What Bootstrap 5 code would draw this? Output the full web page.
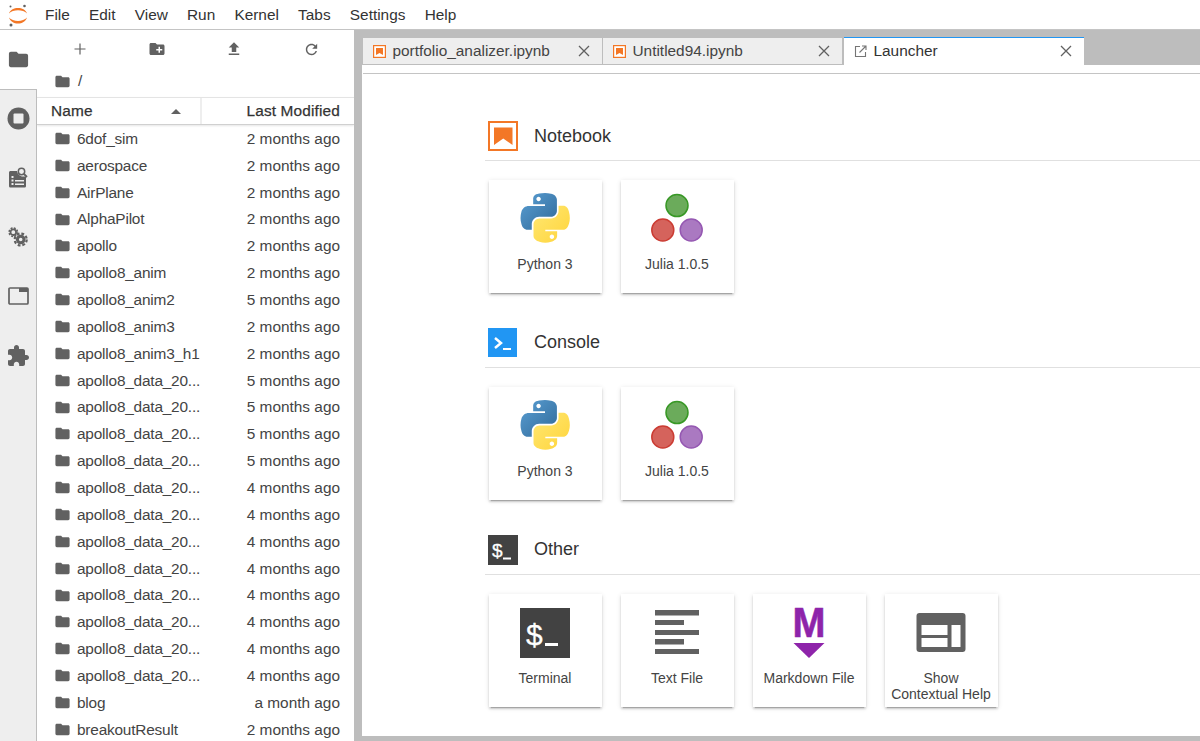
<!DOCTYPE html>
<html lang="en">
<head>
<meta charset="utf-8">
<title>JupyterLab</title>
<link href="https://cdn.jsdelivr.net/npm/bootstrap@5.3.0/dist/css/bootstrap.min.css" rel="stylesheet">
<style>
html,body{height:741px;overflow:hidden;}
body{font-family:"Liberation Sans",Arial,sans-serif;font-size:15.4px;color:#444;background:#fff;}
symbol{overflow:visible;}
.ic{fill:#616161;display:block;flex:none;}
.topmenu{height:30px;border-bottom:1px solid #c4c4c4;padding:0 0 0 8px;gap:19.2px;color:#333;}
.topmenu .brandlogo{margin-right:-2.200px;}
.workspace{height:711px;}
.siderail{width:37px;flex:none;}
.railbtn{height:59.4px;background:#eee;border-right:1px solid #bdbdbd;}
.railbtn.first{background:#fff;border-right:0;height:58.6px;}
.railbtn.second{border-top:1px solid #bdbdbd;}
.railfill{background:#eee;border-right:1px solid #bdbdbd;}
.browser{width:317px;flex:none;}
.fbtools{height:37px;padding:1px 4px 0;}
.fbtools>div{width:77.3px;}
.crumbs{height:30px;padding:0 0 2px 17px;gap:7px;color:#444;}
.fbhead{height:28px;border-top:1px solid #e4e4e4;border-bottom:1px solid #d0d0d0;box-shadow:0 1px 2px rgba(0,0,0,.1);color:#333;-webkit-text-stroke:.25px #333;letter-spacing:.15px;position:relative;}
.hname{width:165px;padding-left:14px;border-right:2px solid #eee;}
.hdate{padding-right:14px;}
.caretup{width:0;height:0;border:5px solid transparent;border-top:0;border-bottom:5px solid #616161;margin-right:19px;}
.fbrow{height:26.86px;padding:0 14px 0 17px;border:0;color:#444;background:transparent;}
.fbname{margin-left:6px;white-space:nowrap;letter-spacing:-.2px;}
.splitter{width:8px;flex:none;background:#bdbdbd;}
.mainarea{min-width:0;margin-left:1px;}
.tabstrip{height:35px;background:#bdbdbd;padding-top:8px;margin-left:-1px;padding-left:1px;flex:none;}
.doctab{width:240px;height:27px;background:#eee;border-right:1px solid #bdbdbd;border-bottom:1px solid #bdbdbd;padding:0 12px 0 10px;gap:6.5px;color:#444;}
.doctab.on{width:240px;margin-left:1px;height:28px;margin-top:-1px;background:#fff;color:#333;border-top:1px solid #2196f3;border-right:0;border-bottom:0;padding-bottom:1px;}
.tabtitle{white-space:nowrap;}
.tabspacer{height:9px;flex:none;border-bottom:1px solid #c4c4c4;}
.launcherbody{padding:47px 0 0 122px;overflow:hidden;min-height:0;}
.sechead{height:40px;border-bottom:1px solid #e0e0e0;padding:0 0 9px 3px;gap:16px;font-size:18px;color:#333;width:900px;}
.sechead.later{padding-bottom:10px;}
.secgrid{padding:19px 0 35px 3.5px;gap:19px;}
.tile{width:113px;height:113px;flex:none;border:0;border-radius:0;padding-top:13px;box-shadow:0 3px 1px -2px rgba(0,0,0,.2),0 2px 2px 0 rgba(0,0,0,.14),0 1px 5px 0 rgba(0,0,0,.12);font-size:14px;line-height:16px;color:#444;text-align:center;}
.tile svg{display:block;margin:0 auto;overflow:visible;}
.tilelabel{margin-top:13px;padding:0 4px;}
.bottomband{height:5px;background:#bdbdbd;flex:none;margin-left:-1px;}
</style>
</head>
<body>
<svg width="0" height="0" class="position-absolute">
<defs>
<symbol id="folder" viewBox="0 0 24 24"><path d="M10 4H4c-1.1 0-2 .9-2 2v12c0 1.1.9 2 2 2h16c1.1 0 2-.9 2-2V8c0-1.1-.9-2-2-2h-8l-2-2z"/></symbol>
<symbol id="closex" viewBox="0 0 12 12"><path d="M1 1l10 10M11 1L1 11" stroke="#616161" stroke-width="1.3" fill="none"/></symbol>
<symbol id="nbsmall" viewBox="0 0 13 13"><rect x=".6" y=".6" width="11.8" height="11.8" fill="#fff" stroke="#f37726" stroke-width="1.2"/><path d="M3 3h7v7L6.5 8 3 10z" fill="#f37726"/></symbol>
<linearGradient id="pyb" x1="0" y1="0" x2="1" y2="1"><stop offset="0" stop-color="#5a9fd4"/><stop offset="1" stop-color="#306998"/></linearGradient>
<linearGradient id="pyy" x1="0" y1="0" x2="1" y2="1"><stop offset="0" stop-color="#ffe873"/><stop offset="1" stop-color="#ffd43b"/></linearGradient>
<symbol id="python" viewBox="0 0 110 110">
<path fill="url(#pyb)" d="M54.9 0c-4.6 0-8.9.4-12.7 1.1C31 3.1 29 7.2 29 14.9V25h26v3.4H19.3c-7.6 0-14.2 4.6-16.3 13.2-2.4 9.9-2.5 16 0 26.3 1.8 7.7 6.3 13.2 13.9 13.2h9V68.2c0-8.6 7.4-16.1 16.3-16.1h26c7.2 0 13-6 13-13.2V14.9c0-7-5.9-12.3-13-13.5C63.7.4 59 0 54.9 0zM40.9 8c2.7 0 4.9 2.2 4.9 5 0 2.7-2.2 4.9-4.9 4.9-2.7 0-4.9-2.2-4.9-4.9 0-2.8 2.2-5 4.9-5z"/>
<path fill="url(#pyy)" d="M84.8 28.4v11.4c0 8.9-7.5 16.3-16.1 16.3h-26c-7.1 0-13 6.1-13 13.2v24.8c0 7 6.1 11.2 13 13.2 8.2 2.4 16.1 2.9 26 0 6.5-1.9 13-5.7 13-13.2V84h-26v-3.3h39c7.6 0 10.4-5.3 13-13.2 2.7-8.2 2.6-16 0-26.4-1.9-7.5-5.4-13.2-13-13.2h-9.8zM70.2 91.1c2.7 0 4.9 2.2 4.9 4.9 0 2.8-2.2 5-4.9 5-2.7 0-4.9-2.2-4.9-5 0-2.7 2.2-4.9 4.9-4.9z"/>
</symbol>
<symbol id="julia" viewBox="0 0 50 50">
<circle cx="25" cy="12.600" r="11" fill="#6bab5b" stroke="#389826" stroke-width="1.5"/>
<circle cx="10.800" cy="37" r="11" fill="#d5635c" stroke="#cb3c33" stroke-width="1.5"/>
<circle cx="39.200" cy="37" r="11" fill="#aa79c1" stroke="#9558b2" stroke-width="1.5"/>
</symbol>
</defs>
</svg>

<nav class="navbar d-flex flex-nowrap justify-content-start topmenu">
  <svg class="brandlogo" width="20" height="24" viewBox="0 0 20 24" aria-hidden="true">
    <path d="M1 10.500C2.500 6.500 6 5 10 5s7.500 1.500 9 5.500C17 8.500 13.500 7.300 10 7.300S3 8.500 1 10.500z" fill="#f37726"/>
    <path d="M1 14.500C2.500 18.500 6 20.500 10 20.500s7.500-2 9-6C17 16.500 13.500 18 10 18s-7-1.500-9-3.500z" fill="#f37726"/>
    <circle cx="16.500" cy="3" r="1.300" fill="#616161"/><circle cx="2.500" cy="3.500" r="1" fill="#616161"/><circle cx="3" cy="22" r="1.500" fill="#616161"/>
  </svg>
  <span>File</span><span>Edit</span><span>View</span><span>Run</span><span>Kernel</span><span>Tabs</span><span>Settings</span><span>Help</span>
</nav>

<div class="d-flex workspace">
  <div class="siderail d-flex flex-column">
    <div class="railbtn first d-flex align-items-center justify-content-center"><svg class="ic" width="23" height="23"><use href="#folder"/></svg></div>
    <div class="railbtn second d-flex align-items-center justify-content-center">
      <svg width="23" height="23" viewBox="0 0 23 23"><circle cx="11.500" cy="11.500" r="11" fill="#616161"/><rect x="6.500" y="6.500" width="10" height="10" rx="1" fill="#eee"/></svg>
    </div>
    <div class="railbtn d-flex align-items-center justify-content-center">
      <svg width="20" height="21" viewBox="0 0 20 21"><path d="M1 5.500c0-1 .8-1.500 1.500-1.500H9c.5 3 3 5.500 6 5.500h3V19c0 1-.8 1.500-1.500 1.500h-14C1.800 20.500 1 20 1 19z" fill="#616161"/><path d="M3.500 9h2v2h-2zM3.500 12.500h2v2h-2zM3.500 16h2v2h-2zM7 13h9v1.500H7zM7 16.500h9V18H7z" fill="#eee"/><circle cx="13.500" cy="4.500" r="3.200" fill="none" stroke="#616161" stroke-width="1.500"/><path d="M16 7l3 3" stroke="#616161" stroke-width="1.800"/></svg>
    </div>
    <div class="railbtn d-flex align-items-center justify-content-center">
      <svg width="21" height="21" viewBox="0 0 21 21"><circle cx="5.300" cy="5.200" r="2.800" fill="none" stroke="#616161" stroke-width="1.800"/><circle cx="5.300" cy="5.200" r="4.200" fill="none" stroke="#616161" stroke-width="1.500" stroke-dasharray="2 1.300"/><circle cx="12.700" cy="12.500" r="3.300" fill="none" stroke="#616161" stroke-width="3"/><circle cx="12.700" cy="12.500" r="6" fill="none" stroke="#616161" stroke-width="2.200" stroke-dasharray="2.800 1.900"/></svg>
    </div>
    <div class="railbtn d-flex align-items-center justify-content-center">
      <svg width="21" height="18" viewBox="0 0 21 18"><rect x="1" y="1" width="19" height="16" rx="1" fill="none" stroke="#616161" stroke-width="1.700"/><rect x="11" y="1" width="9" height="4" fill="#616161"/></svg>
    </div>
    <div class="railbtn d-flex align-items-center justify-content-center">
      <svg class="ic" width="24" height="24" viewBox="0 0 24 24"><path d="M20.500 11H19V7c0-1.100-.9-2-2-2h-4V3.500C13 2.120 11.880 1 10.500 1S8 2.120 8 3.500V5H4c-1.100 0-1.990.9-1.990 2v3.800H3.500c1.490 0 2.700 1.210 2.700 2.700s-1.210 2.700-2.700 2.700H2V20c0 1.100.9 2 2 2h3.800v-1.500c0-1.490 1.210-2.700 2.700-2.700 1.490 0 2.700 1.210 2.700 2.700V22H17c1.100 0 2-.9 2-2v-4h1.500c1.380 0 2.500-1.120 2.500-2.500S21.880 11 20.500 11z"/></svg>
    </div>
    <div class="railfill flex-grow-1"></div>
  </div>

  <div class="browser d-flex flex-column overflow-hidden">
    <div class="fbtools d-flex align-items-center flex-shrink-0">
      <div class="d-flex justify-content-center"><svg width="16" height="16" viewBox="0 0 16 16"><path d="M8 2.500v11M2.500 8h11" stroke="#616161" stroke-width="1.200"/></svg></div>
      <div class="d-flex justify-content-center"><svg class="ic" width="18" height="18" viewBox="0 0 24 24"><path d="M20 6h-8l-2-2H4c-1.100 0-1.990.9-1.990 2L2 18c0 1.100.9 2 2 2h16c1.100 0 2-.9 2-2V8c0-1.100-.9-2-2-2zm-1 8h-3v3h-2v-3h-3v-2h3V9h2v3h3v2z"/></svg></div>
      <div class="d-flex justify-content-center"><svg class="ic" width="18" height="18" viewBox="0 0 24 24"><path d="M9 16h6v-6h4l-7-7-7 7h4v6zm-4 2h14v2H5v-2z"/></svg></div>
      <div class="d-flex justify-content-center"><svg class="ic" width="17" height="17" viewBox="0 0 24 24"><path d="M17.650 6.350C16.200 4.900 14.210 4 12 4c-4.420 0-7.990 3.580-7.990 8s3.570 8 7.990 8c3.730 0 6.840-2.550 7.730-6h-2.080c-.82 2.330-3.040 4-5.650 4-3.310 0-6-2.690-6-6s2.690-6 6-6c1.660 0 3.140.69 4.220 1.780L13 11h7V4l-2.350 2.350z"/></svg></div>
    </div>
    <div class="crumbs d-flex align-items-center flex-shrink-0"><svg class="ic" width="17" height="17"><use href="#folder"/></svg><span>/</span></div>
    <div class="fbhead d-flex align-items-center flex-shrink-0">
      <div class="hname d-flex align-items-center justify-content-between h-100"><span>Name</span><span class="caretup"></span></div>
      <div class="hdate flex-grow-1 text-end">Last Modified</div>
    </div>
    <div class="list-group list-group-flush rounded-0 flex-shrink-0">
      <div class="list-group-item fbrow d-flex align-items-center"><svg class="ic" width="17" height="17"><use href="#folder"/></svg><span class="fbname">6dof_sim</span><span class="ms-auto">2 months ago</span></div>
      <div class="list-group-item fbrow d-flex align-items-center"><svg class="ic" width="17" height="17"><use href="#folder"/></svg><span class="fbname">aerospace</span><span class="ms-auto">2 months ago</span></div>
      <div class="list-group-item fbrow d-flex align-items-center"><svg class="ic" width="17" height="17"><use href="#folder"/></svg><span class="fbname">AirPlane</span><span class="ms-auto">2 months ago</span></div>
      <div class="list-group-item fbrow d-flex align-items-center"><svg class="ic" width="17" height="17"><use href="#folder"/></svg><span class="fbname">AlphaPilot</span><span class="ms-auto">2 months ago</span></div>
      <div class="list-group-item fbrow d-flex align-items-center"><svg class="ic" width="17" height="17"><use href="#folder"/></svg><span class="fbname">apollo</span><span class="ms-auto">2 months ago</span></div>
      <div class="list-group-item fbrow d-flex align-items-center"><svg class="ic" width="17" height="17"><use href="#folder"/></svg><span class="fbname">apollo8_anim</span><span class="ms-auto">2 months ago</span></div>
      <div class="list-group-item fbrow d-flex align-items-center"><svg class="ic" width="17" height="17"><use href="#folder"/></svg><span class="fbname">apollo8_anim2</span><span class="ms-auto">5 months ago</span></div>
      <div class="list-group-item fbrow d-flex align-items-center"><svg class="ic" width="17" height="17"><use href="#folder"/></svg><span class="fbname">apollo8_anim3</span><span class="ms-auto">2 months ago</span></div>
      <div class="list-group-item fbrow d-flex align-items-center"><svg class="ic" width="17" height="17"><use href="#folder"/></svg><span class="fbname">apollo8_anim3_h1</span><span class="ms-auto">2 months ago</span></div>
      <div class="list-group-item fbrow d-flex align-items-center"><svg class="ic" width="17" height="17"><use href="#folder"/></svg><span class="fbname">apollo8_data_20...</span><span class="ms-auto">5 months ago</span></div>
      <div class="list-group-item fbrow d-flex align-items-center"><svg class="ic" width="17" height="17"><use href="#folder"/></svg><span class="fbname">apollo8_data_20...</span><span class="ms-auto">5 months ago</span></div>
      <div class="list-group-item fbrow d-flex align-items-center"><svg class="ic" width="17" height="17"><use href="#folder"/></svg><span class="fbname">apollo8_data_20...</span><span class="ms-auto">5 months ago</span></div>
      <div class="list-group-item fbrow d-flex align-items-center"><svg class="ic" width="17" height="17"><use href="#folder"/></svg><span class="fbname">apollo8_data_20...</span><span class="ms-auto">5 months ago</span></div>
      <div class="list-group-item fbrow d-flex align-items-center"><svg class="ic" width="17" height="17"><use href="#folder"/></svg><span class="fbname">apollo8_data_20...</span><span class="ms-auto">4 months ago</span></div>
      <div class="list-group-item fbrow d-flex align-items-center"><svg class="ic" width="17" height="17"><use href="#folder"/></svg><span class="fbname">apollo8_data_20...</span><span class="ms-auto">4 months ago</span></div>
      <div class="list-group-item fbrow d-flex align-items-center"><svg class="ic" width="17" height="17"><use href="#folder"/></svg><span class="fbname">apollo8_data_20...</span><span class="ms-auto">4 months ago</span></div>
      <div class="list-group-item fbrow d-flex align-items-center"><svg class="ic" width="17" height="17"><use href="#folder"/></svg><span class="fbname">apollo8_data_20...</span><span class="ms-auto">4 months ago</span></div>
      <div class="list-group-item fbrow d-flex align-items-center"><svg class="ic" width="17" height="17"><use href="#folder"/></svg><span class="fbname">apollo8_data_20...</span><span class="ms-auto">4 months ago</span></div>
      <div class="list-group-item fbrow d-flex align-items-center"><svg class="ic" width="17" height="17"><use href="#folder"/></svg><span class="fbname">apollo8_data_20...</span><span class="ms-auto">4 months ago</span></div>
      <div class="list-group-item fbrow d-flex align-items-center"><svg class="ic" width="17" height="17"><use href="#folder"/></svg><span class="fbname">apollo8_data_20...</span><span class="ms-auto">4 months ago</span></div>
      <div class="list-group-item fbrow d-flex align-items-center"><svg class="ic" width="17" height="17"><use href="#folder"/></svg><span class="fbname">apollo8_data_20...</span><span class="ms-auto">4 months ago</span></div>
      <div class="list-group-item fbrow d-flex align-items-center"><svg class="ic" width="17" height="17"><use href="#folder"/></svg><span class="fbname">blog</span><span class="ms-auto">a month ago</span></div>
      <div class="list-group-item fbrow d-flex align-items-center"><svg class="ic" width="17" height="17"><use href="#folder"/></svg><span class="fbname">breakoutResult</span><span class="ms-auto">2 months ago</span></div>
    </div>
  </div>

  <div class="splitter"></div>

  <div class="mainarea flex-grow-1 d-flex flex-column">
    <div class="tabstrip d-flex">
      <div class="doctab d-flex align-items-center"><svg width="13" height="13"><use href="#nbsmall"/></svg><span class="tabtitle flex-grow-1">portfolio_analizer.ipynb</span><svg width="12" height="12"><use href="#closex"/></svg></div>
      <div class="doctab d-flex align-items-center"><svg width="13" height="13"><use href="#nbsmall"/></svg><span class="tabtitle flex-grow-1">Untitled94.ipynb</span><svg width="12" height="12"><use href="#closex"/></svg></div>
      <div class="doctab on d-flex align-items-center">
        <svg width="13" height="13" viewBox="0 0 13 13"><path d="M6 1.500H1.500v10h10V7" fill="none" stroke="#757575" stroke-width="1.100"/><path d="M5.500 7.500L11.500 1.500M8 1h4v4" fill="none" stroke="#757575" stroke-width="1.100"/></svg>
        <span class="tabtitle flex-grow-1">Launcher</span><svg width="12" height="12"><use href="#closex"/></svg></div>
    </div>
    <div class="tabspacer"></div>
    <div class="launcherbody flex-grow-1">
      <div class="sechead d-flex align-items-center">
        <svg width="30" height="30" viewBox="0 0 30 30"><rect x="1" y="1" width="28" height="28" fill="#fff" stroke="#f37726" stroke-width="2"/><path d="M6 6.500h18.500V24l-9.250-6.500L6 24z" fill="#f37726"/></svg>
        <span>Notebook</span>
      </div>
      <div class="secgrid d-flex">
        <div class="card tile"><svg width="50" height="50"><use href="#python"/></svg><div class="tilelabel">Python 3</div></div>
        <div class="card tile"><svg width="50" height="50"><use href="#julia"/></svg><div class="tilelabel">Julia 1.0.5</div></div>
      </div>
      <div class="sechead later d-flex align-items-center">
        <svg width="30" height="30" viewBox="0 0 30 30"><rect width="29" height="29" fill="#2196f3"/><path d="M7 10l6 5-6 5" fill="none" stroke="#fff" stroke-width="2.500"/><rect x="15" y="20" width="8" height="2" fill="#fff"/></svg>
        <span>Console</span>
      </div>
      <div class="secgrid d-flex">
        <div class="card tile"><svg width="50" height="50"><use href="#python"/></svg><div class="tilelabel">Python 3</div></div>
        <div class="card tile"><svg width="50" height="50"><use href="#julia"/></svg><div class="tilelabel">Julia 1.0.5</div></div>
      </div>
      <div class="sechead later d-flex align-items-center">
        <svg width="30" height="30" viewBox="0 0 30 30"><rect width="30" height="30" fill="#424242"/><text x="4" y="22" font-family="Liberation Sans" font-size="19" fill="#fff" stroke="#fff" stroke-width=".3">$</text><rect x="15" y="22.500" width="8" height="2" fill="#fff"/></svg>
        <span>Other</span>
      </div>
      <div class="secgrid d-flex pb-0">
        <div class="card tile"><svg width="50" height="50" viewBox="0 0 50 50"><rect width="50" height="50" y="1" fill="#424242"/><text x="6" y="38" font-family="Liberation Sans" font-size="30" fill="#fff" stroke="#fff" stroke-width=".3">$</text><rect x="25" y="36" width="13" height="3" fill="#fff"/></svg><div class="tilelabel">Terminal</div></div>
        <div class="card tile"><svg width="50" height="50" viewBox="0 0 50 50"><path fill="#616161" d="M3 3h44v5.500H3zM3 13h29v5H3zM3 23h44v5H3zM3 32h29v5.500H3zM3 42h44v5H3z"/></svg><div class="tilelabel">Text File</div></div>
        <div class="card tile"><svg width="50" height="50" viewBox="0 0 50 50"><text x="8.500" y="30" font-family="Liberation Sans" font-weight="700" font-size="43" fill="#8e24aa" stroke="#8e24aa" stroke-width=".6" textLength="33" lengthAdjust="spacingAndGlyphs">M</text><path d="M9.500 36h31L25 51z" fill="#8e24aa"/></svg><div class="tilelabel">Markdown File</div></div>
        <div class="card tile"><svg width="50" height="50" viewBox="0 0 50 50"><rect x=".5" y="6" width="49" height="39" rx="3" fill="#616161"/><path fill="#fff" d="M5.500 18h26v10h-26zM5.500 31h26v9h-26zM35.500 18h9v22h-9z"/></svg><div class="tilelabel">Show Contextual Help</div></div>
      </div>
    </div>
    <div class="bottomband"></div>
  </div>
</div>
<script src="https://cdn.jsdelivr.net/npm/bootstrap@5.3.0/dist/js/bootstrap.bundle.min.js"></script>
</body>
</html>
